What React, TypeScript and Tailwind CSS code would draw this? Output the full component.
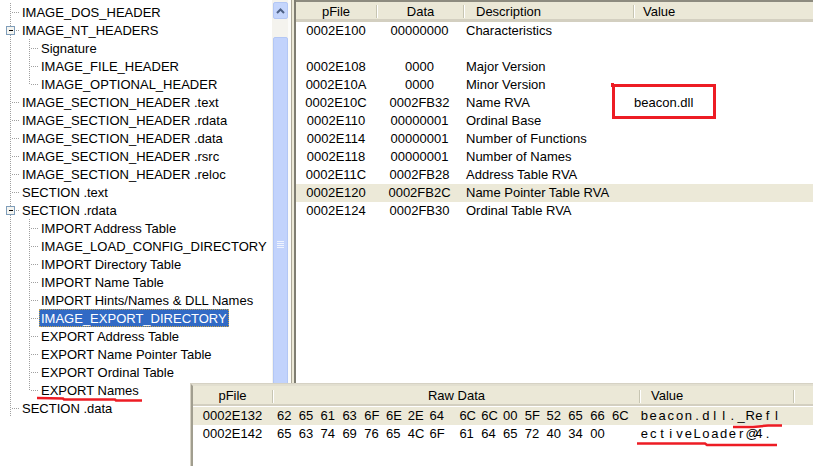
import React from "react";

type TreeNode = {
  label: string;
  level: 0 | 1;
  expanded?: boolean;
  selected?: boolean;
  last?: boolean;
};

const TREE: TreeNode[] = [
  { label: "IMAGE_DOS_HEADER", level: 0 },
  { label: "IMAGE_NT_HEADERS", level: 0, expanded: true },
  { label: "Signature", level: 1 },
  { label: "IMAGE_FILE_HEADER", level: 1 },
  { label: "IMAGE_OPTIONAL_HEADER", level: 1, last: true },
  { label: "IMAGE_SECTION_HEADER .text", level: 0 },
  { label: "IMAGE_SECTION_HEADER .rdata", level: 0 },
  { label: "IMAGE_SECTION_HEADER .data", level: 0 },
  { label: "IMAGE_SECTION_HEADER .rsrc", level: 0 },
  { label: "IMAGE_SECTION_HEADER .reloc", level: 0 },
  { label: "SECTION .text", level: 0 },
  { label: "SECTION .rdata", level: 0, expanded: true },
  { label: "IMPORT Address Table", level: 1 },
  { label: "IMAGE_LOAD_CONFIG_DIRECTORY", level: 1 },
  { label: "IMPORT Directory Table", level: 1 },
  { label: "IMPORT Name Table", level: 1 },
  { label: "IMPORT Hints/Names & DLL Names", level: 1 },
  { label: "IMAGE_EXPORT_DIRECTORY", level: 1, selected: true },
  { label: "EXPORT Address Table", level: 1 },
  { label: "EXPORT Name Pointer Table", level: 1 },
  { label: "EXPORT Ordinal Table", level: 1 },
  { label: "EXPORT Names", level: 1, last: true },
  { label: "SECTION .data", level: 0 },
];

const ROWS: ([string, string, string, string] | null)[] = [
  ["0002E100", "00000000", "Characteristics", ""],
  null,
  ["0002E108", "0000", "Major Version", ""],
  ["0002E10A", "0000", "Minor Version", ""],
  ["0002E10C", "0002FB32", "Name RVA", "beacon.dll"],
  ["0002E110", "00000001", "Ordinal Base", ""],
  ["0002E114", "00000001", "Number of Functions", ""],
  ["0002E118", "00000001", "Number of Names", ""],
  ["0002E11C", "0002FB28", "Address Table RVA", ""],
  ["0002E120", "0002FB2C", "Name Pointer Table RVA", ""],
  ["0002E124", "0002FB30", "Ordinal Table RVA", ""],
];

const RAW = [
  {
    off: "0002E132",
    bytes: ["62", "65", "61", "63", "6F", "6E", "2E", "64", "6C", "6C", "00", "5F", "52", "65", "66", "6C"],
    text: "beacon.dll._Refl",
  },
  {
    off: "0002E142",
    bytes: ["65", "63", "74", "69", "76", "65", "4C", "6F", "61", "64", "65", "72", "40", "34", "00"],
    text: "ectiveLoader@4.",
  },
];

function Gutter({ node }: { node: TreeNode }) {
  const dot = { stroke: "#a0a0a0", strokeDasharray: "1 1", shapeRendering: "crispEdges" as const };
  if (node.level === 0) {
    return (
      <svg width="20" height="18" className="shrink-0">
        <line x1="10.5" y1="0" x2="10.5" y2="18" {...dot} />
        <line x1="12" y1="9.5" x2="20" y2="9.5" {...dot} />
        {node.expanded && (
          <g shapeRendering="crispEdges">
            <rect x="6.5" y="5.5" width="8" height="8" fill="#f4f4f0" stroke="#7f9db9" />
            <line x1="8.5" y1="9.5" x2="12.5" y2="9.5" stroke="#000" />
          </g>
        )}
      </svg>
    );
  }
  return (
    <svg width="39" height="18" className="shrink-0">
      <line x1="10.5" y1="0" x2="10.5" y2="18" {...dot} />
      <line x1="29.5" y1="0" x2="29.5" y2={node.last ? 10 : 18} {...dot} />
      <line x1="31" y1="9.5" x2="39" y2="9.5" {...dot} />
    </svg>
  );
}

function HeaderSep() {
  return <div className="w-[2px] h-[13px] border-l border-[#c7c5b2] bg-white shrink-0" />;
}

export default function App() {
  return (
    <div className="relative w-[813px] h-[466px] overflow-hidden bg-white text-black font-['Liberation_Sans',Arial,sans-serif] text-[13px] leading-[18px] flex">
      {/* Tree pane */}
      <div className="w-[272px] pt-[3px] flex flex-col">
        {TREE.map((n) => (
          <div key={n.label} className="h-[18px] flex items-center">
            <Gutter node={n} />
            <span
              className={`px-[2px] h-[18px] pt-[1px] leading-[17px] whitespace-nowrap ${
                n.selected ? "bg-[#316ac5] text-white outline-1 outline-dotted outline-[#c9a34a] -outline-offset-1" : ""
              }`}
            >
              {n.label}
            </span>
          </div>
        ))}
      </div>

      {/* Scrollbar */}
      <div className="w-[16px] bg-[#f4f3ee] flex flex-col items-center pt-[2px]">
        <div className="w-[15px] h-[17px] rounded-[2px] border border-[#b3c7f5] bg-[#c4d5fc] flex items-center justify-center">
          <svg width="9" height="6" viewBox="0 0 9 6">
            <polyline points="1,5 4.5,1.5 8,5" fill="none" stroke="#4d6185" strokeWidth="2" />
          </svg>
        </div>
        <div className="h-[18px]" />
        <div className="w-[15px] h-[415px] rounded-[2px] border border-[#b3c7f5] bg-[#c2d3fc] flex flex-col items-center justify-center gap-[1px]">
          {[0, 1, 2, 3].map((i) => (
            <div key={i} className="w-[7px] h-[1px] bg-[#eef3fe]" />
          ))}
        </div>
      </div>

      {/* Splitter */}
      <div className="w-[8px] flex shrink-0">
        <div className="w-[3px] bg-[#fbfbf9]" />
        <div className="w-[1px] bg-[#aca899]" />
        <div className="w-[2px] bg-[#ece9d8]" />
        <div className="w-[2px] bg-[#7f7d72]" />
      </div>

      {/* Right list */}
      <div className="flex-1 flex flex-col">
        <div className="h-[22px] bg-[#ebe8d7] border-t-2 border-t-[#8d8b7f] border-b-[3px] border-b-[#d3cfc0] flex items-center pt-[2px]">
          <div className="w-[80px] text-center">pFile</div>
          <HeaderSep />
          <div className="w-[85px] text-center">Data</div>
          <HeaderSep />
          <div className="w-[168px] pl-[11px]">Description</div>
          <HeaderSep />
          <div className="flex-1 pl-[8px]">Value</div>
        </div>
        {ROWS.map((r, i) =>
          r ? (
            <div key={i} className={`h-[18px] flex ${i === 9 ? "bg-[#ece9d8]" : ""}`}>
              <div className="w-[80px] text-center">{r[0]}</div>
              <div className="w-[87px] text-center">{r[1]}</div>
              <div className="w-[170px] pl-[3px] whitespace-nowrap">{r[2]}</div>
              <div className="flex-1 pl-[1px]">{r[3]}</div>
            </div>
          ) : (
            <div key={i} className="h-[18px]" />
          )
        )}
      </div>

      {/* Hex dump window */}
      <div className="absolute left-[190px] top-[383px] right-0 bottom-0 border-l border-t border-[#d6d2c4] bg-white">
        <div className="h-full border-l-2 border-t-2 border-l-[#a19e8f] border-t-[#e2dfd0] flex flex-col">
          <div className="h-[20px] bg-[#ebe8d7] border-b-2 border-b-[#d3cfc0] flex items-center pt-[2px]">
            <div className="w-[79px] text-center">pFile</div>
            <HeaderSep />
            <div className="w-[365px] text-center">Raw Data</div>
            <HeaderSep />
            <div className="w-[152px] pl-[10px]">Value</div>
            <HeaderSep />
          </div>
          <div className="h-[1px]" />
          {RAW.map((row, i) => (
            <div key={row.off} className={`h-[18px] flex ${i === 0 ? "bg-[#ece9d8]" : ""}`}>
              <div className="w-[79px] text-center">{row.off}</div>
              <div className="w-[367px] pl-[5px] flex">
                {row.bytes.map((b, j) => (
                  <span key={j} className={`w-[21.8px] shrink-0 ${j === 7 ? "mr-[8px]" : ""}`}>
                    {b}
                  </span>
                ))}
              </div>
              <div className="flex pl-[1px]">
                {row.text.split("").map((c, j) => (
                  <span key={j} className="w-[8.8px] text-center shrink-0">
                    {c}
                  </span>
                ))}
              </div>
            </div>
          ))}
        </div>
      </div>

      {/* Red annotations */}
      <svg className="absolute left-0 top-0 pointer-events-none" width="813" height="466">
        <rect x="613.5" y="85.5" width="101" height="32" fill="none" stroke="#ed1c24" strokeWidth="3" />
        <rect x="611" y="83" width="3" height="4" fill="#ed1c24" />
        <polyline points="37,398 63,398.5 64,399.5 115,399.5 116,400.5 142,400.5" fill="none" stroke="#ed1c24" strokeWidth="2.5" />
        <polyline points="733,427 753,427 768,425.5 782,425.5" fill="none" stroke="#ed1c24" strokeWidth="2.5" />
        <polyline points="637,443.5 705,443.5 707,445 777,445" fill="none" stroke="#ed1c24" strokeWidth="2.5" />
      </svg>
    </div>
  );
}
